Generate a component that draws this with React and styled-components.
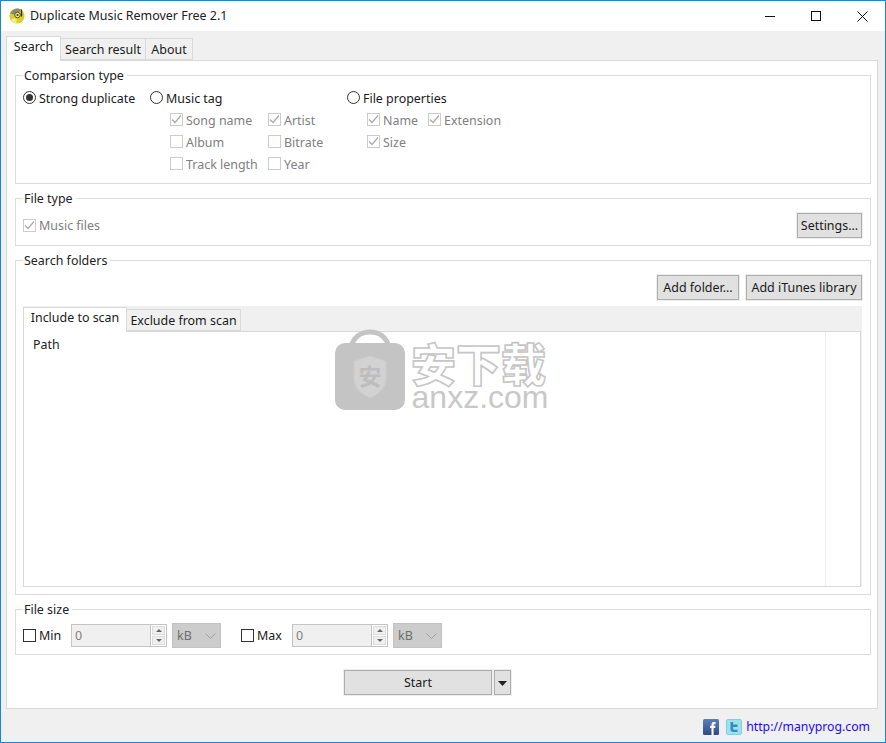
import React from "react";
import styled, { createGlobalStyle } from "styled-components";

const Global = createGlobalStyle`
  html, body { margin: 0; padding: 0; background: #f0f0f0; }
  * { box-sizing: border-box; }
  body { font-family: "Noto Sans", "Open Sans", "Liberation Sans", sans-serif; font-size: 12.45px; color: #1a1a1a; }
`;

const Win = styled.div`
  position: relative; width: 886px; height: 743px; display: flex; flex-direction: column;
  border: 1px solid #1b86d8; background: #f0f0f0; overflow: hidden;
`;
const TitleBar = styled.div`
  height: 30px; background: #fff; display: flex; align-items: center; padding-left: 8px; flex: none;
`;
const TitleText = styled.span`margin-left: 5px; color: #222; flex: 1; line-height: 30px;`;
const WinBtn = styled.span`width: 46px; height: 30px; display: flex; align-items: center; justify-content: center;`;
const Body = styled.div`flex: 1; display: flex; flex-direction: column; padding: 5px 7px 0 5px;`;
const TabBar = styled.div`display: flex; align-items: flex-end; height: 24px; flex: none;`;
const Tab = styled.div`
  position: relative; height: ${p => (p.$active ? 25 : 22)}px; margin-bottom: ${p => (p.$active ? -1 : 0)}px;
  z-index: ${p => (p.$active ? 2 : 0)}; width: ${p => p.$w}px; flex: none; text-align: center;
  line-height: ${p => (p.$active ? 20 : 21)}px; white-space: nowrap;
  background: ${p => (p.$active ? "#fff" : "#f0f0f0")};
  border: 1px solid #d9d9d9; border-bottom: ${p => (p.$active ? "none" : "1px solid #d9d9d9")};
  border-left: ${p => (p.$active || p.$first ? "1px solid #d9d9d9" : "none")};
`;
const Panel = styled.div`
  height: 649px; width: 872px; background: #fff; border: 1px solid #d9d9d9; flex: none;
  padding: 7px 6px 0 8px; display: flex; flex-direction: column; gap: 7px;
`;
const Group = styled.fieldset`
  margin: 0; padding: 1px 8px 0 7px; min-width: 0; height: ${p => p.$h}px; flex: none;
  border: 1px solid #dcdcdc;
`;
const Legend = styled.legend`padding: 0 3px 0 1px; margin-left: 0; line-height: 15px; height: 15px; color: #222;`;
const CompareGrid = styled.div`display: grid; grid-template-columns: 127px 197px 1fr; padding-top: 3px;`;
const Col = styled.div`display: flex; flex-direction: column;`;
const Row = styled.div`display: flex; align-items: center; height: 22px; color: ${p => (p.$off ? "#808080" : "#1a1a1a")}; white-space: nowrap;`;
const SubGrid = styled.div`display: grid; margin-left: 20px; grid-template-columns: ${p => p.$cols};`;
const Box = styled.span`
  width: 13px; height: 13px; flex: none; margin: 0 3px 1px 0; display: inline-flex; align-items: center; justify-content: center;
  border: 1px solid ${p => (p.$off ? "#cccccc" : "#333")}; background: #fff;
`;
const Ring = styled.span`
  width: 13px; height: 13px; flex: none; margin: 0 3px 1px 0; border-radius: 50%; border: 1px solid #333;
  display: inline-flex; align-items: center; justify-content: center;
`;
const Dot = styled.span`width: 7px; height: 7px; border-radius: 50%; background: #333;`;
const Btn = styled.button`
  font: inherit; color: #1a1a1a; height: 25px; width: ${p => p.$w}px; flex: none; padding: 1px 0 0; background: #e1e1e1;
  border: 1px solid #adadad; outline: 1px solid #eeeeee; outline-offset: 0; margin: 0;
  display: flex; align-items: center; justify-content: center; line-height: 1;
`;
const FileTypeRow = styled.div`display: flex; align-items: center; justify-content: space-between; height: 25px; margin-top: 6px;`;
const BtnRow = styled.div`display: flex; justify-content: flex-end; gap: 7px; height: 25px; margin-top: 6px;`;
const InnerTabs = styled.div`
  margin-top: 6px; background: #f0f0f0; height: 281px; width: 839px; display: flex; flex-direction: column;
`;
const InnerBar = styled.div`display: flex; align-items: flex-end; height: 25px; flex: none;`;
const InnerPanel = styled.div`
  flex: 1; width: 838px; background: #fff; border: 1px solid #d9d9d9; display: grid; grid-template-columns: 802px 1fr;
`;
const PathCol = styled.div`padding: 5px 0 0 9px; line-height: 16px; border-right: 1px solid #e9eef3; color: #222;`;
const SizeRow = styled.div`display: flex; align-items: center; height: 25px; margin-top: 5px; white-space: nowrap;`;
const SizeCheck = styled.div`display: flex; align-items: center; width: ${p => p.$w}px; flex: none; color: #1a1a1a;`;
const NumField = styled.div`
  width: 96px; height: 23px; flex: none; border: 1px solid #c4c4c4; background: #f0f0f0; display: flex;
  color: #808080; line-height: 21px;
`;
const NumValue = styled.span`flex: 1; padding-left: 3px;`;
const Spin = styled.span`width: 16px; flex: none; background: #fff; border-left: 1px solid #c4c4c4; display: flex; flex-direction: column; gap: 1px; padding: 1px;`;
const SpinBtn = styled.span`flex: 1; background: #f0f0f0; border: 1px solid #dcdcdc; display: flex; align-items: center; justify-content: center;`;
const Select = styled.div`
  width: 49px; height: 25px; flex: none; margin: 0 ${p => p.$mr || 0}px 0 5px; background: #cccccc; border: 1px solid #c2c2c2;
  display: flex; align-items: center; justify-content: space-between; padding: 0 4px 0 4px; color: #6e6e6e;
`;
const StartRow = styled.div`display: flex; margin: 8px 0 0 329px; gap: 2px; height: 25px;`;
const Footer = styled.div`flex: 1; display: flex; align-items: center; justify-content: flex-end; gap: 7px; padding-right: 8px; padding-top: 2px;`;
const Link = styled.a`color: #1a0dee; margin-left: -3px; line-height: 16px; font-size: 12.25px; text-decoration: none;`;
const Watermark = styled.div`
  position: absolute; left: 333px; top: 328px; width: 216px; height: 82px; display: flex; gap: 4px; pointer-events: none;
`;
const WmText = styled.div`display: flex; flex-direction: column; align-items: center; width: 140px;`;
const WmCn = styled.span`
  font-family: "Noto Sans CJK SC", sans-serif; font-weight: 900; font-size: 45px; line-height: 42px; margin: 13px 3px 0 0;
  color: #fff; -webkit-text-stroke: 1.6px #c6c6c6; letter-spacing: 0; white-space: nowrap;
`;
const WmEn = styled.span`
  font-family: "Liberation Sans", sans-serif; font-size: 32px; line-height: 26px; color: #c8c8c8; white-space: nowrap;
`;

const Check = ({ color = "#a9a9a9" }) => (
  <svg width="11" height="11" viewBox="0 0 11 11"><path d="M1 5.5 4 8.5 10 1.5" fill="none" stroke={color} strokeWidth="1.2" /></svg>
);
const Cb = ({ label, checked, off = true }) => (
  <Row $off={off}><Box $off={off}>{checked && <Check />}</Box>{label}</Row>
);
const Radio = ({ label, on }) => (
  <Row><Ring>{on && <Dot />}</Ring>{label}</Row>
);
const Arrow = ({ up }) => (
  <svg width="6" height="3" viewBox="0 0 6 3"><path d={up ? "M3 0 6 3H0Z" : "M0 0H6L3 3Z"} fill="#666" /></svg>
);
const Chevron = () => (
  <svg width="11" height="6" viewBox="0 0 11 6"><path d="M.5.5 5.5 5.5 10.5.5" fill="none" stroke="#a0a0a0" /></svg>
);
const SizeFields = ({ mr }) => (
  <>
    <NumField>
      <NumValue>0</NumValue>
      <Spin><SpinBtn><Arrow up /></SpinBtn><SpinBtn><Arrow /></SpinBtn></Spin>
    </NumField>
    <Select $mr={mr}>kB<Chevron /></Select>
  </>
);
const AppIcon = () => (
  <svg width="16" height="16" viewBox="0 0 16 16">
    <circle cx="8" cy="8" r="7.6" fill="#dccd2c" />
    <path d="M1 5.5A7.6 7.6 0 0 1 12 1.6L9.5 5A4 4 0 0 0 5 6.5Z" fill="#8b8a6a" />
    <path d="M2 12a7.6 7.6 0 0 0 5 3.5l1-4-3-1.5Z" fill="#f3ee8a" />
    <circle cx="8.5" cy="7" r="2.8" fill="#efe76a" stroke="#55553f" />
    <circle cx="8.5" cy="7" r="1" fill="#333" />
    <path d="M12.5 1.5v7" stroke="#2c2c2c" strokeWidth="1.3" />
  </svg>
);
const Facebook = () => (
  <svg width="16" height="16" viewBox="0 0 16 16">
    <defs><linearGradient id="fb" x1="0" y1="0" x2="0" y2="1"><stop offset="0" stopColor="#5d7fb8" /><stop offset="1" stopColor="#2f4a86" /></linearGradient></defs>
    <rect width="16" height="16" rx="1.5" fill="url(#fb)" />
    <path d="M8.5 16V9H7V6.8h1.5V5.4C8.5 3.6 9.6 3 11 3h1.5v2.2h-1c-.6 0-.9.2-.9.8v.8h1.9L12.2 9h-1.6v7Z" fill="#fff" />
  </svg>
);
const Twitter = () => (
  <svg width="16" height="16" viewBox="0 0 16 16">
    <rect x=".5" y=".5" width="15" height="15" rx="1.5" fill="#9fe0ee" stroke="#7fcfe2" />
    <path d="M4.5 3h2.6v2.6h4.4v2.3H7.1v1.7c0 .8.4 1.1 1.1 1.1h3.3V13H7.4C5.5 13 4.5 12 4.5 10.2Z" fill="#2f8fc0" />
  </svg>
);
const Bag = () => (
  <svg width="72" height="82" viewBox="0 0 72 82">
    <path d="M17 18C20 7 28 3 36 3s16 4 19 15" fill="none" stroke="#c4c4c4" strokeWidth="5" />
    <rect x="1" y="14" width="70" height="67" rx="10" fill="#c4c4c4" />
    <path d="M36 27 52 32V50C52 60 43 66 36 69 29 66 20 60 20 50V32Z" fill="#d2d2d2" stroke="#cbcbcb" />
    <text x="36" y="56" fontSize="23" textAnchor="middle" fill="#bdbdbd" fontWeight="700" fontFamily="'Noto Sans CJK SC', sans-serif">安</text>
  </svg>
);

export default function App() {
  return (
    <>
      <Global />
      <Win>
        <TitleBar>
          <AppIcon />
          <TitleText>Duplicate Music Remover Free 2.1</TitleText>
          <WinBtn><svg width="11" height="11" viewBox="0 0 11 11"><path d="M0 5.5H10" stroke="#111" /></svg></WinBtn>
          <WinBtn><svg width="11" height="11" viewBox="0 0 11 11"><rect x=".5" y=".5" width="9" height="9" fill="none" stroke="#111" /></svg></WinBtn>
          <WinBtn><svg width="11" height="11" viewBox="0 0 11 11"><path d="M.5.5 10.5 10.5M10.5.5.5 10.5" stroke="#111" /></svg></WinBtn>
        </TitleBar>
        <Body>
          <TabBar>
            <Tab $active $w={55}>Search</Tab>
            <Tab $w={85}>Search result</Tab>
            <Tab $w={47}>About</Tab>
          </TabBar>
          <Panel>
            <Group $h={116}>
              <Legend>Comparsion type</Legend>
              <CompareGrid>
                <Col><Radio on label="Strong duplicate" /></Col>
                <Col>
                  <Radio label="Music tag" />
                  <SubGrid $cols="98px 1fr">
                    <Cb checked label="Song name" />
                    <Cb checked label="Artist" />
                    <Cb label="Album" />
                    <Cb label="Bitrate" />
                    <Cb label="Track length" />
                    <Cb label="Year" />
                  </SubGrid>
                </Col>
                <Col>
                  <Radio label="File properties" />
                  <SubGrid $cols="61px 1fr">
                    <Cb checked label="Name" />
                    <Cb checked label="Extension" />
                    <Cb checked label="Size" />
                  </SubGrid>
                </Col>
              </CompareGrid>
            </Group>
            <Group $h={55}>
              <Legend>File type</Legend>
              <FileTypeRow>
                <Cb checked label="Music files" />
                <Btn $w={65}>Settings...</Btn>
              </FileTypeRow>
            </Group>
            <Group $h={342}>
              <Legend>Search folders</Legend>
              <BtnRow>
                <Btn $w={82}>Add folder...</Btn>
                <Btn $w={116}>Add iTunes library</Btn>
              </BtnRow>
              <InnerTabs>
                <InnerBar>
                  <Tab $active $w={104} $first>Include to scan</Tab>
                  <Tab $w={114}>Exclude from scan</Tab>
                </InnerBar>
                <InnerPanel>
                  <PathCol>Path</PathCol>
                  <span />
                </InnerPanel>
              </InnerTabs>
            </Group>
            <Group $h={53}>
              <Legend>File size</Legend>
              <SizeRow>
                <SizeCheck $w={48}><Box />Min</SizeCheck>
                <SizeFields mr={20} />
                <SizeCheck $w={51}><Box />Max</SizeCheck>
                <SizeFields />
              </SizeRow>
            </Group>
            <StartRow>
              <Btn $w={148}>Start</Btn>
              <Btn $w={17}><svg width="9" height="5" viewBox="0 0 9 5"><path d="M0 0H9L4.5 5Z" fill="#222" /></svg></Btn>
            </StartRow>
          </Panel>
          <Footer>
            <Facebook />
            <Twitter />
            <Link href="#">http://manyprog.com</Link>
          </Footer>
        </Body>
        <Watermark>
          <Bag />
          <WmText>
            <WmCn>安下载</WmCn>
            <WmEn>anxz.com</WmEn>
          </WmText>
        </Watermark>
      </Win>
    </>
  );
}
